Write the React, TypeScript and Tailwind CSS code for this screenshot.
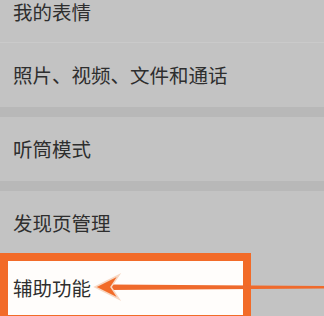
import React from "react";

const rowText = "text-[19.5px] leading-none text-[#2e2e2e]";

function Row({ label, h = "h-[64px]" }: { label: string; h?: string }) {
  return (
    <div className={`flex ${h} items-center pl-[13px]`}>
      <span className={rowText}>{label}</span>
    </div>
  );
}

function Band() {
  return <div className="h-[10px] bg-[#b8b8b8]" />;
}

export default function App() {
  return (
    <div
      className="h-[316px] w-[324px] overflow-hidden bg-[#c3c3c3]"
      style={{ fontFamily: '"Noto Sans CJK SC", "Noto Sans", sans-serif' }}
    >
      <div className="-mt-[19px]">
        <Row label="我的表情" h="h-[61px]" />
        <div className="h-px bg-[#cacaca]" />
        <Row label="照片、视频、文件和通话" />
        <Band />
        <Row label="听筒模式" />
        <Band />
        <Row label="发现页管理" />

        {/* highlighted row with annotation */}
        <div className="relative -mt-[2px] h-[70px]">
          <div className="flex h-[70px] w-[251px] items-center border-[8px] border-[#f26b28] bg-[#fffdfb] pl-[5px]">
            <span className={rowText}>辅助功能</span>
          </div>
          <svg
            className="absolute left-0 top-0"
            width="324"
            height="70"
            viewBox="0 0 324 70"
          >
            <polygon points="110,31.5 324,33 324,35.5 110,37" fill="#ef6a2c" />
            <polygon
              points="95,34 119,22 111,34 119,46"
              fill="#f26b28"
              stroke="#f7d7c2"
              strokeWidth="1.5"
              strokeLinejoin="miter"
            />
          </svg>
        </div>
      </div>
    </div>
  );
}
